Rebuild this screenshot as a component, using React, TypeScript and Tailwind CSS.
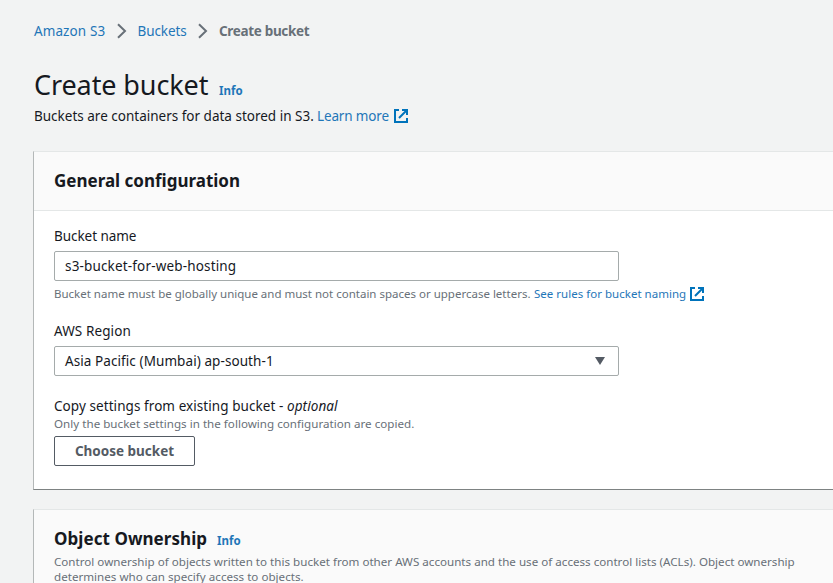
import type { ReactNode } from "react";

function Chevron() {
  return (
    <svg className="h-4 w-[10px] shrink-0" viewBox="0 0 10 16" fill="none" stroke="#687078" strokeWidth="2">
      <path d="M1 1.2 L8 8 L1 14.8" />
    </svg>
  );
}

function ExternalIcon() {
  return (
    <svg className="size-[14px] shrink-0" viewBox="0 0 14 14" fill="none" stroke="#0073bb" strokeWidth="2">
      <path d="M5 1H1V13H13V9" />
      <path d="M8 1H13V6M13 1L5 9" />
    </svg>
  );
}

function Panel({ header, className, children }: { header: ReactNode; className: string; children?: ReactNode }) {
  return (
    <section className={"border-l border-t border-l-[#b4b8b8] border-t-[#e4e7e7] bg-white " + className}>
      {header}
      {children}
    </section>
  );
}

export default function App() {
  return (
    <main className="flex h-[583px] w-[833px] flex-col overflow-hidden bg-[#f2f3f3] pl-[33px] font-['Noto_Sans',sans-serif] text-[14px] leading-5 whitespace-nowrap text-[#16191f]">
      <nav className="mt-[21px] flex h-5 items-center pl-px text-[#1f76b8]">
        <a className="w-[83px] text-[13.5px] tracking-[0.1px]">Amazon S3</a>
        <Chevron />
        <a className="ml-[10.5px] w-[60.5px] text-[13.5px] tracking-[-0.1px]">Buckets</a>
        <Chevron />
        <span className="ml-[11px] text-[13.5px] font-bold tracking-[-0.33px] text-[#687078]">Create bucket</span>
      </nav>

      <div className="mt-[26px] flex h-9 items-baseline pl-px">
        <h1 className="w-[185px] text-[27px] leading-9 tracking-[-0.1px]">Create bucket</h1>
        <a className="text-[11.5px] font-bold text-[#1f76b8]">Info</a>
      </div>
      <p className="mt-[3px] flex h-5 items-center pl-px">
        <span className="w-[283px] text-[13.5px]">Buckets are containers for data stored in S3.</span>
        <a className="w-[77px] text-[13.5px] tracking-[-0.15px] text-[#1f76b8]">Learn more</a>
        <ExternalIcon />
      </p>

      <Panel
        className="mt-[25px] h-[339px] shrink-0 border-b border-b-[#7d8282]"
        header={
          <header className="flex h-[59px] items-center border-b border-[#e4e7e7] bg-[#fafafa] pb-px pl-5">
            <h2 className="text-[17px] font-bold">General configuration</h2>
          </header>
        }
      >
        <div className="flex flex-col items-start pt-[15px] pl-5">
          <label className="h-5 text-[13.5px] tracking-[-0.05px]">Bucket name</label>
          <div className="mt-[5px] flex h-[30px] w-[565px] items-center rounded-[2px] border border-[#a5abab] pl-[10px] text-[13.5px] tracking-[0.16px]">
            s3-bucket-for-web-hosting
          </div>
          <p className="mt-[3px] flex h-5 items-center text-[11.5px] text-[#687078]">
            <span className="w-[480px]">Bucket name must be globally unique and must not contain spaces or uppercase letters.</span>
            <a className="w-[156px] tracking-[0.02px] text-[#1f76b8]">See rules for bucket naming</a>
            <ExternalIcon />
          </p>
          <label className="mt-[17px] h-5 text-[13.5px] tracking-[0.1px]">AWS Region</label>
          <div className="mt-[5px] flex h-[30px] w-[565px] items-center justify-between rounded-[2px] border border-[#a5abab] pr-[13px] pl-[10px] text-[13.5px]">
            <span className="tracking-[0.08px]">Asia Pacific (Mumbai) ap-south-1</span>
            <svg className="h-2 w-[10px]" viewBox="0 0 10 8" fill="#545b64"><path d="M0 0H10L5 8Z" /></svg>
          </div>
          <p className="mt-5 h-5 text-[13.5px] tracking-[0.07px]"><span>Copy settings from existing bucket - </span><i>optional</i></p>
          <p className="h-4 text-[11.6px] leading-4 tracking-[0.02px] text-[#687078]">Only the bucket settings in the following configuration are copied.</p>
          <button className="mt-1 h-[30px] w-[141px] rounded-[2px] border border-[#545b64] text-[13.5px] font-bold text-[#545b64]">Choose bucket</button>
        </div>
      </Panel>

      <Panel
        className="mt-[19px] h-[100px] shrink-0"
        header={
          <header className="h-full bg-[#fafafa] pt-[17px] pl-5">
            <div className="flex h-6 items-baseline">
              <h2 className="w-[163px] text-[17px] leading-6 font-bold tracking-[0.06px]">Object Ownership</h2>
              <a className="text-[11.5px] font-bold text-[#1f76b8]">Info</a>
            </div>
            <p className="mt-[3px] text-[11.6px] leading-[15px] tracking-[0.01px] text-[#687078]">
              <span>Control ownership of objects written to this bucket from other AWS accounts and the use of access control lists (ACLs). Object ownership</span>
              <br />
              <span>determines who can specify access to objects.</span>
            </p>
          </header>
        }
      />
    </main>
  );
}
